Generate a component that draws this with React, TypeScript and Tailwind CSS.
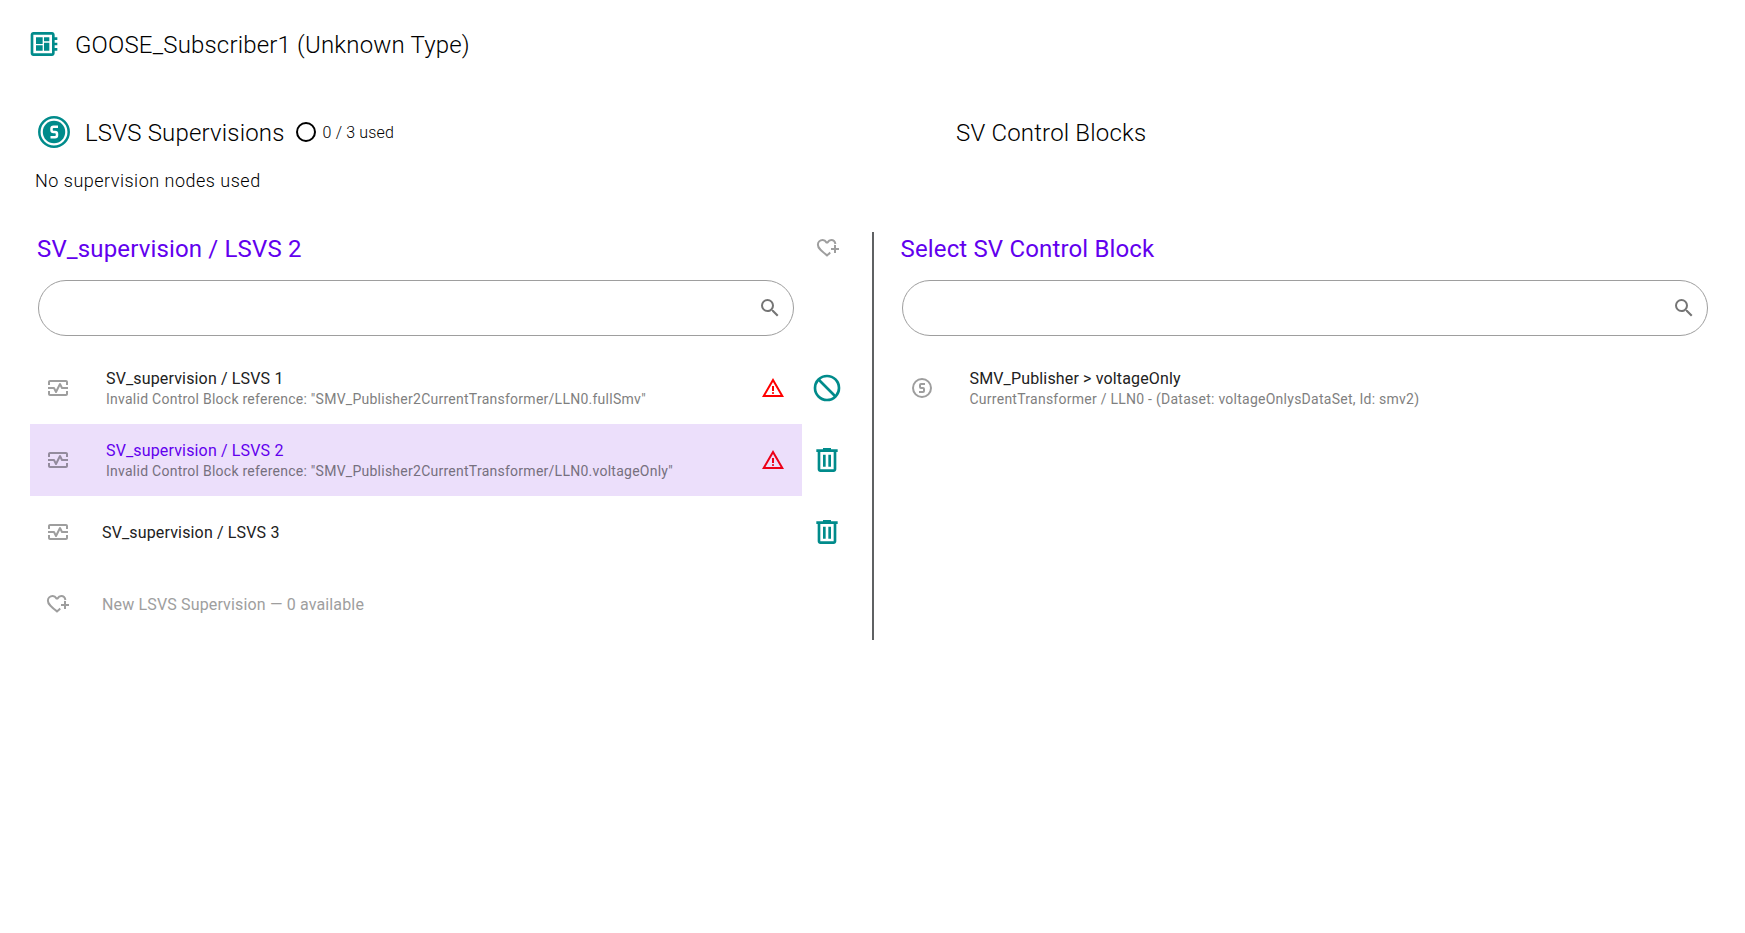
import { ReactNode } from "react";

type IconProps = { d: string; className: string };

function Icon({ d, className }: IconProps) {
  return (
    <svg viewBox="0 0 24 24" fill="currentColor" className={`shrink-0 ${className}`}>
      <path d={d} />
    </svg>
  );
}

const paths = {
  board:
    "M22 9V7h-2V5c0-1.1-.9-2-2-2H4c-1.1 0-2 .9-2 2v14c0 1.1.9 2 2 2h14c1.1 0 2-.9 2-2v-2h2v-2h-2v-2h2v-2h-2V9h2zm-4 10H4V5h14v14zM6 13h5v4H6zm6-6h4v3h-4zM6 7h5v5H6zm6 4h4v6h-4z",
  monitor:
    "M20 4H4c-1.1 0-2 .9-2 2v3h2V6h16v3h2V6c0-1.1-.9-2-2-2zM20 18H4v-3H2v3c0 1.1.9 2 2 2h16c1.1 0 2-.9 2-2v-3h-2v3zM14.89 7.55c-.34-.68-1.45-.68-1.79 0L10 13.76l-1.11-2.21A.988.988 0 0 0 8 11H2v2h5.38l1.72 3.45c.18.34.52.55.9.55s.72-.21.89-.55L14 10.24l1.11 2.21c.17.34.51.55.89.55h6v-2h-5.38l-1.73-3.45z",
  block:
    "M12 2A10 10 0 1 1 12 22A10 10 0 1 1 12 2zM12 4C10.150 4 8.450 4.630 7.100 5.690L18.310 16.900A7.902 7.902 0 0 0 20 12C20 7.580 16.420 4 12 4zM5.690 7.100A7.902 7.902 0 0 0 4 12C4 16.420 7.580 20 12 20C13.850 20 15.550 19.370 16.900 18.310z",
  trash:
    "M7 21q-.825 0-1.412-.587T5 19V6H4V4h5V3h6v1h5v2h-1v13q0 .825-.587 1.413T17 21zM17 6H7v13h10zM9 17h2V8H9zm4 0h2V8h-2z",
  warning:
    "M1 21L12 2l11 19zm3.45-2h15.1L12 6zM12 18q.425 0 .713-.288T13 17t-.288-.712T12 16t-.712.288T11 17t.288.713T12 18m-1-3h2v-5h-2z",
  search:
    "M15.5 14h-.79l-.28-.27A6.471 6.471 0 0 0 16 9.5 6.5 6.5 0 1 0 9.5 16c1.61 0 3.09-.59 4.23-1.57l.27.28v.79l5 4.99L20.49 19l-4.99-5zm-6 0C7.01 14 5 11.99 5 9.5S7.01 5 9.5 5 14 7.01 14 9.5 11.99 14 9.5 14z",
  circleS:
    "M11,7A2,2 0 0,0 9,9V11A2,2 0 0,0 11,13H13V15H9V17H13A2,2 0 0,0 15,15V13A2,2 0 0,0 13,11H11V9H15V7H11M12,2A10,10 0 0,1 22,12A10,10 0 0,1 12,22A10,10 0 0,1 2,12A10,10 0 0,1 12,2M12,4A8,8 0 0,0 4,12A8,8 0 0,0 12,20A8,8 0 0,0 20,12A8,8 0 0,0 12,4Z",
};

function HeartPlus({ className }: { className: string }) {
  return (
    <svg viewBox="0 0 24 24" fill="none" stroke="currentColor" strokeWidth="2" className={`shrink-0 ${className}`}>
      <path d="M19.4 8C19 5.500 17.400 4 15.300 4c-1.600 0-2.900 1-3.900 2.600h-.8C9.600 5 8.300 4 6.700 4 3.900 4 1.900 6.100 1.900 8.700c0 3.500 3.300 6.200 9.100 10.700 1.200-.95 2.200-1.900 3.200-2.800" />
      <path d="M19 9v8M15 13h8" />
    </svg>
  );
}

function SupervisionLogo() {
  return (
    <svg viewBox="0 0 32 32" className="size-8 shrink-0 text-[#008b8b]">
      <circle cx="16" cy="16" r="14.700" fill="none" stroke="currentColor" strokeWidth="2.500" />
      <circle cx="16" cy="16" r="11.200" fill="currentColor" />
      <path d="M20 10.800h-4.500a2 2 0 0 0-2 2v1.200a2 2 0 0 0 2 2h1.500a2 2 0 0 1 2 2v1.200a2 2 0 0 1-2 2h-4.500" fill="none" stroke="#fff" strokeWidth="2.500" />
    </svg>
  );
}

function SearchField() {
  return (
    <div className="flex h-14 items-center justify-end rounded-full border border-[#9e9e9e] pr-[11px]">
      <Icon d={paths.search} className="size-6 text-[#757575]" />
    </div>
  );
}

type RowProps = {
  icon: ReactNode;
  title: string;
  detail?: string;
  selected?: boolean;
  muted?: boolean;
  warn?: boolean;
};

function Row({ icon, title, detail, selected, muted, warn }: RowProps) {
  const tone = selected ? "text-[#6200ee]" : muted ? "text-[#9e9e9e]" : "text-[#212121]";
  return (
    <div className={`flex h-[72px] min-w-0 flex-1 items-center pr-[17px] pl-4 ${selected ? "bg-[#ecdffb]" : ""}`}>
      <span className={selected ? "text-[#938b9d]" : "text-[#9e9e9e]"}>{icon}</span>
      <div className={`flex flex-1 flex-col pt-0.5 whitespace-nowrap ${detail ? "pl-9" : "pl-8"}`}>
        <span className={`text-base leading-5 tracking-[0.15px] ${tone}`}>{title}</span>
        {detail && (
          <span className={`text-sm leading-5 tracking-[0.255px] ${selected ? "text-[#76707e]" : "text-[#7f7f7f]"}`}>{detail}</span>
        )}
      </div>
      {warn && <Icon d={paths.warning} className={`size-6 ${selected ? "text-[#ec0018]" : "text-[#ff0000]"}`} />}
    </div>
  );
}

function Action({ d }: { d?: string }) {
  return <div className="flex w-[50px] shrink-0 items-center justify-center text-[#008b8b]">{d && <Icon d={d} className="size-8" />}</div>;
}

export default function App() {
  const monitor = <Icon d={paths.monitor} className="size-6" />;
  return (
    <main className="min-h-[933px] bg-white font-['Roboto',sans-serif] text-black">
      <h1 className="flex h-[88px] items-center pl-7 text-2xl font-light tracking-[0.18px]">
        <Icon d={paths.board} className="size-8 text-[#008b8b]" />
        <span className="pt-0.5 pl-[15px]">GOOSE_Subscriber1 (Unknown Type)</span>
      </h1>

      <div className="flex h-[88px] items-center">
        <div className="flex w-[956px] items-center pl-[38px]">
          <SupervisionLogo />
          <h2 className="pt-0.5 pl-[15px] text-2xl font-light tracking-[0.18px]">LSVS Supervisions</h2>
          <svg viewBox="0 0 24 24" className="ml-[9px] size-6 shrink-0">
            <circle cx="12" cy="12" r="9" fill="none" stroke="black" strokeWidth="2" />
          </svg>
          <span className="pt-0.5 pl-[5px] text-base font-light tracking-[0.15px]">0 / 3 used</span>
        </div>
        <h2 className="pt-0.5 text-2xl font-light tracking-[0.18px]">SV Control Blocks</h2>
      </div>
      <p className="h-14 pl-[35px] text-lg leading-[10px] font-light tracking-[0.5px]">No supervision nodes used</p>

      <div className="flex h-[408px]">
        <section className="w-[872px] pl-[30px]">
          <div className="flex h-12 items-start pt-px pl-[7px]">
            <h2 className="w-[779px] text-2xl leading-8 tracking-[0.15px] text-[#6200ee]">SV_supervision / LSVS 2</h2>
            <HeartPlus className="mt-[3px] size-6 text-[#9e9e9e]" />
          </div>
          <div className="w-[764px] pl-2">
            <SearchField />
          </div>
          <div className="flex w-[822px] flex-col pt-4">
            <div className="flex">
              <Row icon={monitor} title="SV_supervision / LSVS 1" detail={'Invalid Control Block reference: "SMV_Publisher2CurrentTransformer/LLN0.fullSmv"'} warn />
              <Action d={paths.block} />
            </div>
            <div className="flex">
              <Row icon={monitor} title="SV_supervision / LSVS 2" detail={'Invalid Control Block reference: "SMV_Publisher2CurrentTransformer/LLN0.voltageOnly"'} selected warn />
              <Action d={paths.trash} />
            </div>
            <div className="flex">
              <Row icon={monitor} title="SV_supervision / LSVS 3" />
              <Action d={paths.trash} />
            </div>
            <div className="flex">
              <Row icon={<HeartPlus className="size-6" />} title="New LSVS Supervision — 0 available" muted />
              <Action />
            </div>
          </div>
        </section>
        <div className="w-[2px] bg-[#5f6163]" />
        <section className="flex-1 pl-[19.5px]">
          <h2 className="h-12 pt-px pl-[7px] text-2xl leading-8 tracking-[0.15px] text-[#6200ee]">Select SV Control Block</h2>
          <div className="w-[814.5px] pl-2">
            <SearchField />
          </div>
          <div className="flex pt-4">
            <Row icon={<Icon d={paths.circleS} className="size-6" />} title="SMV_Publisher > voltageOnly" detail="CurrentTransformer / LLN0 - (Dataset: voltageOnlysDataSet, Id: smv2)" />
          </div>
        </section>
      </div>
    </main>
  );
}
